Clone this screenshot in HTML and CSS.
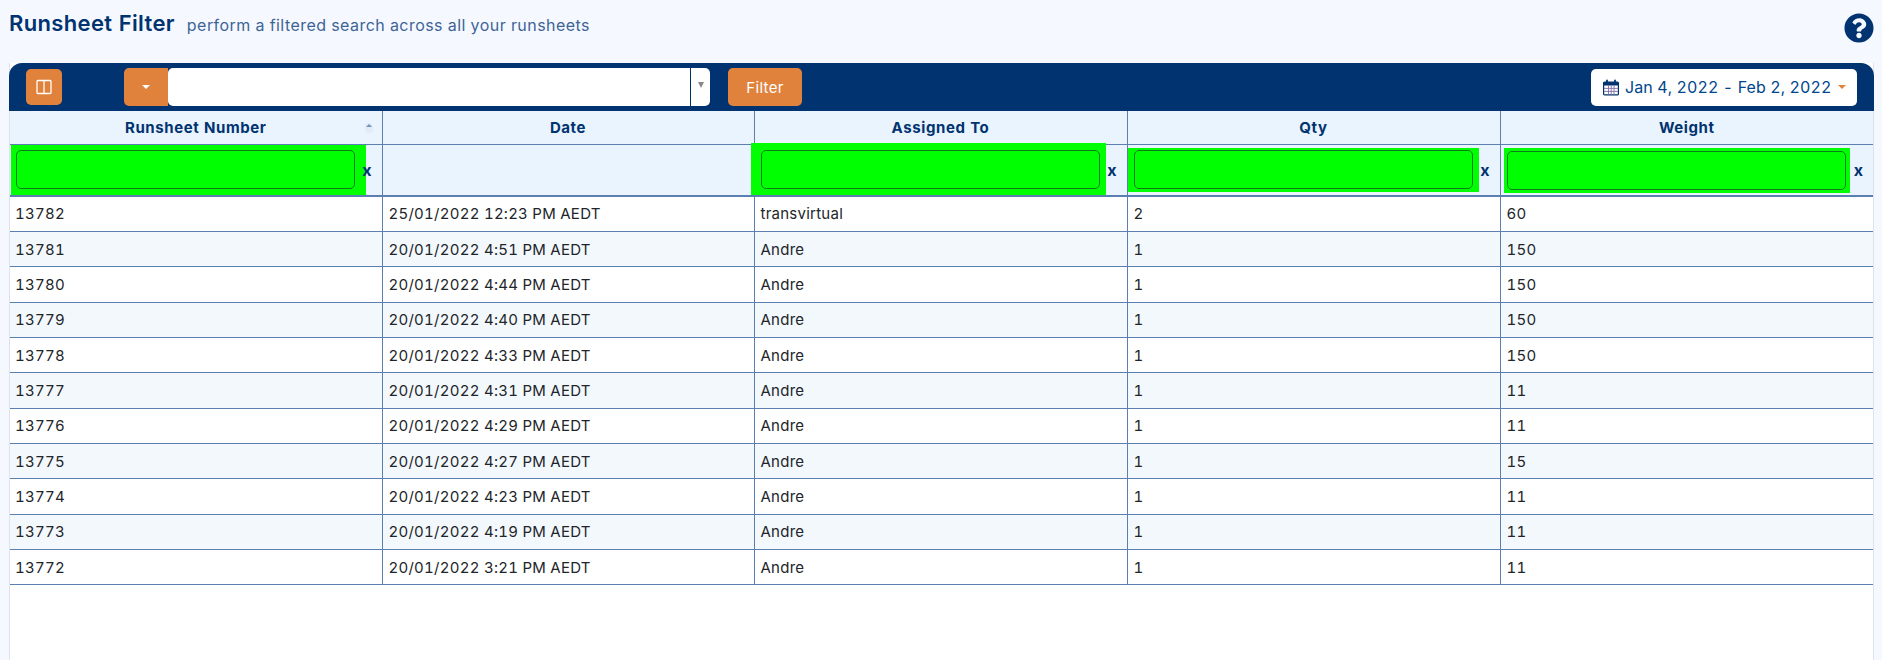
FILE: index.html
```html
<!DOCTYPE html>
<html lang="en">
<head>
<meta charset="utf-8">
<title>Runsheet Filter</title>
<link rel="stylesheet" href="styles.css">
</head>
<body>
<header class="page-head">
  <div class="titles">
    <h1>Runsheet Filter</h1>
    <span class="sub">perform a filtered search across all your runsheets</span>
  </div>
  <svg class="help" viewBox="0 0 512 512"><path fill="#00336f" d="M504 256c0 137-111 248-248 248S8 393 8 256 119 8 256 8s248 111 248 248zM262.700 90c-54.500 0-89.300 23-116.600 63.800-3.500 5.300-2.400 12.400 2.700 16.300l34.700 26.300c5.200 3.900 12.600 3 16.700-2.100 17.900-22.700 30.100-35.800 57.300-35.800 20.400 0 45.700 13.100 45.700 33 0 15-12.400 22.700-32.600 34-23.600 13.200-54.800 29.700-54.800 70.900V302c0 6.600 5.400 12 12 12h56c6.600 0 12-5.400 12-12v-1.300c0-28.600 83.500-29.800 83.500-107.200C379.300 135.300 318.800 90 262.700 90zM256 338c-25.500 0-46.200 20.700-46.200 46.200 0 25.500 20.700 46.200 46.200 46.200s46.200-20.700 46.200-46.200c0-25.500-20.700-46.200-46.200-46.200z"/></svg>
</header>
<main class="panel">
  <div class="toolbar">
    <button class="btn btn-cols" type="button" aria-label="Columns">
      <svg viewBox="0 0 16 16" width="16" height="16"><rect x="1" y="1.500" width="14" height="13" rx="1" fill="none" stroke="#fff" stroke-width="1.300"/><path d="M8 1.500v13" stroke="#fff" stroke-width="1.300"/></svg>
    </button>
    <div class="combo">
      <button class="btn btn-drop" type="button" aria-label="Open"><span class="caret"></span></button>
      <div class="combo-field"></div>
      <div class="combo-arrow"><span class="caret grey"></span></div>
    </div>
    <button class="btn btn-filter" type="button">Filter</button>
    <button class="range" type="button">
      <svg class="cal" viewBox="0 0 16 16" width="16" height="17"><rect x="0.600" y="2.600" width="14.800" height="12.800" rx="1" fill="#fff" stroke="#00336f" stroke-width="1.200"/><rect x="0.600" y="2.600" width="14.800" height="3.400" fill="#00336f"/><path d="M4 .8v3M12 .8v3" stroke="#00336f" stroke-width="1.800" stroke-linecap="round"/><path d="M5.500 6v9M8.200 6v9M11 6v9M1 8.900h14M1 11.900h14" stroke="#7f6fa8" stroke-width=".9"/></svg>
      <span>Jan 4, 2022 - Feb 2, 2022</span>
      <span class="caret orange"></span>
    </button>
  </div>
  <table class="grid">
    <thead>
      <tr class="head-row">
        <th class="col-w1">Runsheet Number<span class="sort"></span></th>
        <th class="col-w1">Date</th>
        <th class="col-w2">Assigned To</th>
        <th class="col-w2">Qty</th>
        <th>Weight</th>
      </tr>
      <tr class="filter-row">
        <th class="fcell"><div class="hl hl-a"><div class="finput"></div></div><span class="clear">x</span></th>
        <th></th>
        <th class="fcell"><div class="hl hl-c"><div class="finput"></div></div><span class="clear">x</span></th>
        <th class="fcell"><div class="hl hl-d"><div class="finput"></div></div><span class="clear">x</span></th>
        <th class="fcell"><div class="hl hl-e"><div class="finput"></div></div><span class="clear">x</span></th>
      </tr>
    </thead>
    <tbody>
      <tr><td>13782</td><td>25/01/2022 12:23 PM AEDT</td><td>transvirtual</td><td>2</td><td>60</td></tr>
      <tr><td>13781</td><td>20/01/2022 4:51 PM AEDT</td><td>Andre</td><td>1</td><td>150</td></tr>
      <tr><td>13780</td><td>20/01/2022 4:44 PM AEDT</td><td>Andre</td><td>1</td><td>150</td></tr>
      <tr><td>13779</td><td>20/01/2022 4:40 PM AEDT</td><td>Andre</td><td>1</td><td>150</td></tr>
      <tr><td>13778</td><td>20/01/2022 4:33 PM AEDT</td><td>Andre</td><td>1</td><td>150</td></tr>
      <tr><td>13777</td><td>20/01/2022 4:31 PM AEDT</td><td>Andre</td><td>1</td><td>11</td></tr>
      <tr><td>13776</td><td>20/01/2022 4:29 PM AEDT</td><td>Andre</td><td>1</td><td>11</td></tr>
      <tr><td>13775</td><td>20/01/2022 4:27 PM AEDT</td><td>Andre</td><td>1</td><td>15</td></tr>
      <tr><td>13774</td><td>20/01/2022 4:23 PM AEDT</td><td>Andre</td><td>1</td><td>11</td></tr>
      <tr><td>13773</td><td>20/01/2022 4:19 PM AEDT</td><td>Andre</td><td>1</td><td>11</td></tr>
      <tr><td>13772</td><td>20/01/2022 3:21 PM AEDT</td><td>Andre</td><td>1</td><td>11</td></tr>
    </tbody>
  </table>
</main>
</body>
</html>
```
FILE: styles.css
```css
* { box-sizing: border-box; }
html, body { height: 100%; }
body {
  margin: 0;
  height: 660px;
  overflow: hidden;
  background: #f5f9ff;
  font-family: Inter, "Liberation Sans", sans-serif;
  font-size: 15px;
  font-variant-numeric: tabular-nums;
  color: #212529;
}
.page-head {
  display: flex;
  justify-content: space-between;
  height: 63px;
  padding: 10px 8px 0 9px;
}
.titles { display: flex; align-items: baseline; gap: 12px; height: 26px; }
h1 {
  margin: 0;
  font-size: 22px;
  font-weight: 600;
  letter-spacing: .35px;
  color: #00336f;
}
.sub { font-size: 16px; color: #3e6496; letter-spacing: .45px; }
.help { width: 30px; height: 30px; margin-top: 3px; }
.panel {
  margin: 0 8px 0 9px;
  height: 597px;
  background: #fff;
  border-left: 1px solid #dde3ec;
  border-right: 1px solid #dde3ec;
}
.toolbar {
  display: flex;
  align-items: center;
  height: 48px;
  margin: 0 -1px;
  padding: 0 17px 0 17px;
  background: #00336f;
  border-radius: 13px 13px 0 0;
}
button { font-family: inherit; }
.btn {
  border: 0;
  border-radius: 5px;
  background: #e0823c;
  color: #fff;
  padding: 0;
  display: flex;
  align-items: center;
  justify-content: center;
}
.btn-cols { width: 36px; height: 36px; }
.combo { display: flex; height: 38px; margin-left: 62px; }
.btn-drop { width: 44px; height: 38px; border-radius: 5px 0 0 5px; }
.combo-field { width: 523px; background: #fff; border-radius: 5px 0 0 5px; border-right: 1px solid #00336f; }
.combo-arrow { width: 19px; background: #fff; border-radius: 0 5px 5px 0; display: flex; justify-content: center; padding-top: 14px; }
.btn-filter { width: 74px; height: 38px; margin-left: 18px; font-size: 15px; letter-spacing: .3px; }
.range {
  display: flex;
  align-items: center;
  gap: 6px;
  width: 266px;
  height: 37px;
  margin-left: auto;
  padding: 0 0 0 12px;
  border: 0;
  border-radius: 5px;
  background: #fff;
  color: #00468c;
  font-size: 16px;
  letter-spacing: .1px;
  font-variant-numeric: tabular-nums;
  white-space: nowrap;
}
.caret {
  display: block;
  width: 0; height: 0;
  border-left: 4px solid transparent;
  border-right: 4px solid transparent;
  border-top: 4px solid #fff;
}
.caret.grey { border-top: 6px solid #888; border-left-width: 3.500px; border-right-width: 3.500px; }
.caret.orange { border-top-color: #e0823c; }
.grid {
  width: 100%;
  table-layout: fixed;
  border-collapse: collapse;
}
.col-w1 { width: 372px; }
.col-w2 { width: 373px; }
.grid th, .grid td { border: 1px solid #5a7fb0; }
.grid th:first-child, .grid td:first-child { border-left: 0; }
.grid th:last-child, .grid td:last-child { border-right: 0; }
.grid thead tr:first-child th { border-top: 0; }
.grid thead th { background: #eaf4fe; color: #00336f; font-weight: 700; position: relative; letter-spacing: .6px; }
.head-row { height: 33px; }
.filter-row { height: 52px; }
.filter-row th { border-bottom: 2px solid #5a7fb0; padding: 0; }
.sort {
  position: absolute;
  right: 9px;
  top: 12px;
  width: 8px;
  height: 10px;
  border-radius: 4px;
  background: #e2ecf6;
}
.sort::before {
  content: "";
  position: absolute;
  left: 1px; top: 1px;
  border-left: 3px solid transparent;
  border-right: 3px solid transparent;
  border-bottom: 3px solid #6f92be;
}
.grid tbody tr { height: 35.360px; }
.grid tbody tr:nth-child(even) { background: #f3f8fd; }
.grid td { padding: 0 6px; letter-spacing: .25px; }
.grid td:first-child { padding-left: 5px; }
.fcell { text-align: left; }
.hl {
  position: absolute;
  background: #00ff00;
  display: flex;
  align-items: center;
}
.hl-a { left: 1px; right: 16px; top: 0; bottom: 0; padding-left: 5px; }
.hl-c { left: -4px; right: 21px; top: -2px; bottom: 0; padding: 2px 0 0 10px; }
.hl-d { left: 0; right: 21px; top: 3px; bottom: 3px; padding-left: 6px; }
.hl-e { left: 3px; right: 23px; top: 3px; bottom: 2px; padding-left: 3px; }
.finput {
  width: 339px;
  height: 39px;
  flex: none;
  border: 1px solid #0a7a1a;
  border-radius: 5px;
}
.clear {
  position: absolute;
  right: 10px;
  top: 50%;
  transform: translateY(-50%);
  font-size: 16px;
  font-weight: 700;
  letter-spacing: 0;
  color: #00336f;
  line-height: 1;
}
```
